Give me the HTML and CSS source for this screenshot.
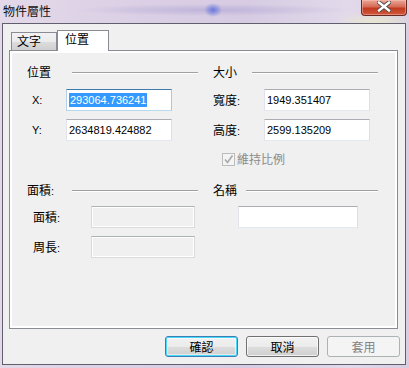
FILE: index.html
```html
<!DOCTYPE html>
<html>
<head>
<meta charset="utf-8">
<link rel="stylesheet" href="styles.css">
</head>
<body>
<div class="window">
  <div class="titlebar">
    <span class="title">物件層性</span>
    <div class="close">
      <svg width="14" height="11" viewBox="0 0 14 11">
        <path d="M2 1.5 L12 9.5 M12 1.5 L2 9.5" stroke="#4a4a4a" stroke-width="4.2" stroke-linecap="square"/>
        <path d="M2 1.5 L12 9.5 M12 1.5 L2 9.5" stroke="#ffffff" stroke-width="2.4" stroke-linecap="square"/>
      </svg>
    </div>
  </div>
  <div class="client">
    <div class="tabs">
      <div class="tab">文字</div>
      <div class="tab active">位置</div>
    </div>
    <div class="panel">
      <div class="grid">
        <section class="group">
          <div class="ghead"><span class="gtitle w-pos">位置</span><span class="gline"></span></div>
          <div class="row first"><span class="lbl lat lbl-xy">X:</span><div class="tb tb-pos focus"><span class="sel">293064.736241</span></div></div>
          <div class="row"><span class="lbl lat lbl-xy">Y:</span><div class="tb tb-pos">2634819.424882</div></div>
        </section>
        <section class="group">
          <div class="ghead"><span class="gtitle w-size">大小</span><span class="gline"></span></div>
          <div class="row first"><span class="lbl lbl-size">寬度<span class="lat">:</span></span><div class="tb tb-pos">1949.351407</div></div>
          <div class="row"><span class="lbl lbl-size">高度<span class="lat">:</span></span><div class="tb tb-pos">2599.135209</div></div>
          <div class="check">
            <span class="cb"><svg width="11" height="11" viewBox="0 0 11 11"><path d="M2 5.5 L4.5 8.5 L9.5 1.5" fill="none" stroke="#a8a8a8" stroke-width="1.6"/></svg></span>
            <span class="cbtext">維持比例</span>
          </div>
        </section>
        <section class="group">
          <div class="ghead"><span class="gtitle w-pos">面積<span class="lat">:</span></span><span class="gline"></span></div>
          <div class="row first"><span class="lbl lbl-area">面積<span class="lat">:</span></span><div class="tb tb-area disabled"></div></div>
          <div class="row"><span class="lbl lbl-area">周長<span class="lat">:</span></span><div class="tb tb-area disabled"></div></div>
        </section>
        <section class="group">
          <div class="ghead"><span class="gtitle w-name">名稱</span><span class="gline"></span></div>
          <div class="row first"><span class="lbl lbl-name"></span><div class="tb tb-name"></div></div>
        </section>
      </div>
    </div>
    <div class="buttons">
      <div class="btn default">確認</div>
      <div class="btn">取消</div>
      <div class="btn off">套用</div>
    </div>
  </div>
</div>
</body>
</html>
```

FILE: styles.css
```css
html, body {
  margin: 0;
  padding: 0;
}
body {
  width: 409px;
  height: 368px;
  overflow: hidden;
  font-family: "Noto Sans CJK TC", "Liberation Sans", sans-serif;
  font-size: 12px;
  color: #000;
}
.window {
  width: 409px;
  height: 368px;
  display: flex;
  flex-direction: column;
  background:
    radial-gradient(ellipse 9px 7px at 213px 10px, rgba(90,110,220,0.85), rgba(120,130,220,0) 100%),
    radial-gradient(ellipse 140px 6px at 210px 10px, rgba(170,160,210,0.55), rgba(170,160,210,0) 100%),
    radial-gradient(ellipse 40px 14px at 375px 24px, rgba(236,238,200,0.8), rgba(236,238,200,0) 100%),
    linear-gradient(to right, #e4d9e9 0%, #dacfe4 35%, #d6cbe2 60%, #e2d9ea 85%, #d9cde2 100%);
}
.titlebar {
  height: 23px;
  flex: none;
  display: flex;
  align-items: flex-start;
}
.title {
  padding: 3px 0 0 3px;
  line-height: 16px;
  font-size: 12px;
  color: #111;
}
.close {
  margin-left: auto;
  margin-right: 2px;
  width: 44px;
  height: 15px;
  border: 1px solid #6a2a24;
  border-top: none;
  border-radius: 0 0 4px 4px;
  background: linear-gradient(to bottom, #e9a899 0%, #d66a55 45%, #c2391f 55%, #cf5a3e 100%);
  box-shadow: inset 0 0 0 1px rgba(255,200,190,0.45);
  display: flex;
  align-items: center;
  justify-content: center;
}
.close svg {
  margin-top: -3px;
}
.client {
  margin: 0 3px 0 2px;
  height: 340px;
  border: 1px solid #5f5f6e;
  background: #f0f0f0;
  display: flex;
  flex-direction: column;
}
.tabs {
  padding: 6px 0 0 8px;
  height: 21px;
  display: flex;
  align-items: flex-start;
  margin-bottom: -1px;
  position: relative;
  z-index: 1;
}
.tab {
  box-sizing: border-box;
  height: 18px;
  margin-top: 2px;
  width: 46px;
  border: 1px solid #898c95;
  border-bottom: none;
  background: linear-gradient(to bottom, #f2f2f2 0%, #ebebeb 50%, #dddddd 51%, #cfcfcf 100%);
  padding-left: 5px;
  line-height: 16px;
  font-size: 12px;
}
.tab.active {
  width: 52px;
  height: 21px;
  margin-top: 0;
  margin-left: 0;
  background: #ffffff;
  padding-left: 7px;
  padding-top: 1px;
  line-height: 14px;
}
.panel {
  box-sizing: border-box;
  margin: 0 7px 0 6px;
  height: 279px;
  border: 1px solid #898c95;
  box-shadow: inset 0 0 0 2px #ffffff;
  background: #f0f0f0;
  padding: 13px 0 0 17px;
}
.grid {
  display: grid;
  grid-template-columns: 171px 165px;
  column-gap: 15px;
  row-gap: 16px;
}
.ghead {
  display: flex;
  align-items: flex-start;
  height: 16px;
}
.gtitle {
  line-height: 16px;
  flex: none;
}
.w-pos { width: 45px; }
.w-size { width: 39px; }
.w-name { width: 33px; }
.gline {
  flex: 1;
  margin-top: 8px;
  height: 0;
  border-top: 1px solid #a0a0a0;
  border-bottom: 1px solid #ffffff;
}
.row {
  display: flex;
  align-items: center;
  height: 22px;
  margin-top: 8px;
}
.row.first {
  margin-top: 9px;
}
.group:nth-child(n+3) .row.first {
  margin-top: 8px;
}
.lbl {
  flex: none;
  line-height: 16px;
}
.lat {
  font-family: "Liberation Sans", sans-serif;
  font-size: 11px;
}
.lbl-xy { width: 34px; padding-left: 5px; }
.lbl-size { width: 51px; }
.lbl-area { width: 58px; padding-left: 6px; }
.lbl-name { width: 25px; }
.tb {
  box-sizing: border-box;
  height: 22px;
  border: 1px solid;
  border-color: #abadb3 #dbdfe6 #e3e9ef #e2e3ea;
  background: #ffffff;
  font-family: "Liberation Sans", sans-serif;
  font-size: 11px;
  line-height: 20px;
  padding-left: 2px;
  white-space: nowrap;
}
.tb-pos { width: 106px; }
.tb-area { width: 104px; }
.tb-name { width: 120px; }
.tb.focus {
  border-color: #3d7bad #a4c9e3 #b7d9ed #b5cfe7;
}
.tb.disabled {
  background: #f0f0f0;
  border-color: #adb2b5 #dadada #dadada #dadada;
  box-shadow: inset 0 0 0 1px #ffffff;
}
.sel {
  display: inline-block;
  background: #3399ff;
  color: #ffffff;
  line-height: 14px;
  padding: 0 1px;
  vertical-align: middle;
  margin-top: -2px;
}
.check {
  display: flex;
  align-items: center;
  height: 14px;
  margin-top: 11px;
  padding-left: 9px;
}
.cb {
  box-sizing: border-box;
  width: 13px;
  height: 13px;
  border: 1px solid #bcbcbc;
  background: #f4f4f4;
  display: flex;
  align-items: center;
  justify-content: center;
  margin-right: 2px;
}
.cbtext {
  color: #8a8a8a;
  line-height: 14px;
}
.buttons {
  display: flex;
  justify-content: flex-end;
  gap: 8px;
  margin-top: 7px;
  padding-right: 5px;
}
.btn {
  box-sizing: border-box;
  width: 73px;
  height: 21px;
  border: 1px solid #707070;
  border-radius: 3px;
  background: linear-gradient(to bottom, #f2f2f2 0%, #ebebeb 50%, #dddddd 51%, #cfcfcf 100%);
  box-shadow: inset 0 0 0 1px rgba(255,255,255,0.7);
  text-align: center;
  line-height: 19px;
  font-size: 12px;
}
.btn.default {
  border-color: #3c7fb1;
  box-shadow: inset 0 0 0 1px #48d8fb, inset 0 0 0 2px rgba(255,255,255,0.5);
}
.btn.off {
  border-color: #adb2b5;
  background: #f4f4f4;
  box-shadow: none;
  color: #838383;
}
```
